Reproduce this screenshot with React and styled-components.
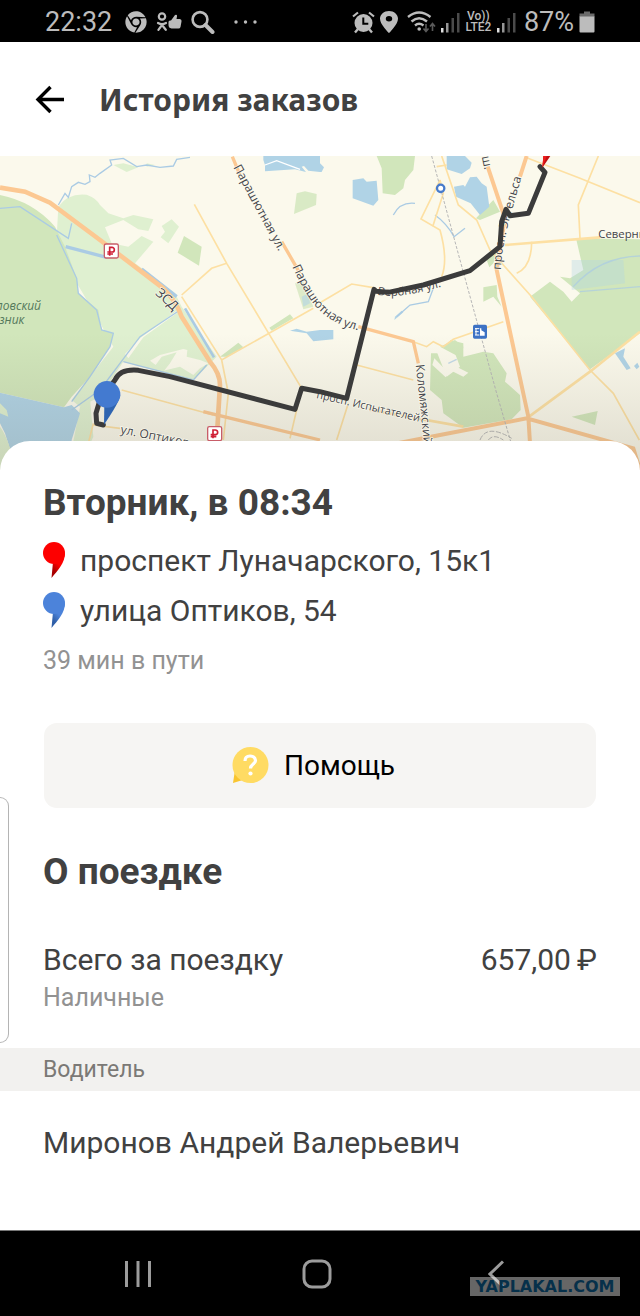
import React from 'react'
import styled, { createGlobalStyle } from 'styled-components'
import { FaChrome } from 'react-icons/fa'
import { MdLocationOn } from 'react-icons/md'

const GlobalStyle = createGlobalStyle`
  * {
    box-sizing: border-box;
  }

  body {
    margin: 0;
    background: #fff;
    color: #414141;
    font-family: Roboto, 'Noto Sans', sans-serif;
  }

  h1, h2, p, ul {
    margin: 0;
    padding: 0;
  }

  svg {
    display: block;
    flex: none;
  }
`

const Page = styled.div`
  position: relative;
  display: flex;
  flex-direction: column;
  min-height: 100vh;
`

const StatusBar = styled.div`
  display: flex;
  justify-content: space-between;
  height: 42px;
  padding: 2px 45px 0;
  background: #000;
  color: #bcbcbc;
`

const StatusGroup = styled.div`
  display: flex;
  align-items: center;
  gap: ${p => p.gap}px;
`

const StatusText = styled.span`
  font-size: 27px;
  line-height: 40px;
  padding: 0 0 0 ${p => p.left || 0}px;
`

const Network = styled.span`
  width: 27px;
  font-size: 12px;
  font-weight: 500;
  line-height: 11px;
  text-align: center;
`

const Header = styled.header`
  display: flex;
  align-items: center;
  gap: 33px;
  height: 114px;
  padding: 2px 34px 0;
`

const IconButton = styled.button`
  display: flex;
  padding: 0;
  border: 0;
  background: none;
  color: #000;
`

const Title = styled.h1`
  font-family: 'Noto Sans', sans-serif;
  font-size: 30px;
  font-weight: 700;
  line-height: 40px;
`

const MapView = styled.svg`
  width: 100%;
  height: 314px;
  font-family: 'Open Sans', 'Noto Sans', sans-serif;
`

const Sheet = styled.main`
  position: relative;
  flex: 1;
  margin-top: -29px;
  padding-top: 38px;
  border-radius: 30px 30px 0 0;
  background: #fff;
`

const Section = styled.section`
  padding: 0 43px;
`

const Heading = styled.h2`
  font-size: 37px;
  font-weight: 700;
  line-height: 48px;
`

const Route = styled.ul`
  margin-top: 8px;
  list-style: none;
`

const Stop = styled.li`
  display: flex;
  align-items: center;
  gap: 15px;
  height: 50px;
  font-size: 30px;
`

const Note = styled.p`
  color: #929292;
  font-size: 25px;
  line-height: ${p => p.line}px;
`

const HelpButton = styled.button`
  display: flex;
  align-items: center;
  justify-content: center;
  gap: 15px;
  width: calc(100% - 2px);
  height: 85px;
  margin: 36px 1px 40px;
  padding: 0 13px 0 0;
  border: 0;
  border-radius: 13px;
  background: #f6f5f3;
  color: #000;
  font-family: inherit;
  font-size: 28px;
`

const Line = styled.div`
  display: flex;
  justify-content: space-between;
  margin-top: ${p => p.top}px;
  font-size: 30px;
  line-height: 40px;
`

const Divider = styled.div`
  margin-top: 33px;
  padding: 0 43px;
  background: #f2f1ef;
  color: #7b7976;
  font-size: 23px;
  line-height: 43px;
`

const EdgePanel = styled.div`
  position: absolute;
  top: 797px;
  left: 0;
  width: 9px;
  height: 246px;
  border: 1px solid #b4b4b4;
  border-left: 0;
  border-radius: 0 10px 10px 0;
`

const NavBar = styled.nav`
  position: relative;
  display: flex;
  align-items: center;
  height: 86px;
  padding: 0 55px 0 48px;
  border-top: 1px solid #777;
  background: #000;
`

const NavButton = styled(IconButton)`
  flex: 1;
  justify-content: center;
  color: #9c9c9c;
`

const Watermark = styled.span`
  position: absolute;
  right: 20px;
  bottom: 20px;
  width: 150px;
  background: rgba(255, 255, 255, 0.4);
  color: #06304a;
  font-family: 'DejaVu Sans', sans-serif;
  font-size: 16px;
  font-weight: 700;
  line-height: 19px;
  text-align: center;
`

const OkLikeIcon = () => (
  <svg width="26" height="22" viewBox="0 0 26 22">
    <g fill="none" stroke="currentColor" strokeWidth="2.2" strokeLinecap="round">
      <circle cx="6" cy="5.5" r="3.2" />
      <path d="M2 12Q6 14.4 10 12M6 14L2.4 18.8M6 14l3.8 4.8" />
    </g>
    <path d="M12.5 11Q12.5 9 15 9.5L19 4q2.500-1 2 1.500L20.500 8H24q2 0.500 1.500 2.500L24.500 16q-0.500 1.500-2 1.500H15.500Q12.500 17 12.500 14z" fill="currentColor" />
  </svg>
)

const SearchIcon = () => (
  <svg width="24" height="24" viewBox="0 0 24 24" fill="none" stroke="currentColor">
    <circle cx="9" cy="9.5" r="7.4" strokeWidth="2.6" />
    <path d="M14.5 15l7 7" strokeWidth="4" strokeLinecap="round" />
  </svg>
)

const DotsIcon = () => (
  <svg width="34" height="6" viewBox="0 0 34 6" fill="currentColor">
    <circle cx="12" cy="3" r="1.7" />
    <circle cx="21.5" cy="3" r="1.7" />
    <circle cx="31" cy="3" r="1.7" />
  </svg>
)

const AlarmIcon = () => (
  <svg width="23" height="23" viewBox="0 0 23 23" fill="none" stroke="currentColor">
    <circle cx="11.5" cy="12" r="9" fill="currentColor" stroke="none" />
    <path d="M1 5.5L6 1.5M17 1.5l5 4" strokeWidth="2.2" />
    <path d="M6 18l-3 3.5M17 18l3 3.5" strokeWidth="2.4" />
    <path d="M11.3 6.5v6.2h5" stroke="#000" strokeWidth="2" />
  </svg>
)

const WifiIcon = () => (
  <svg width="33" height="22" viewBox="0 0 33 22" fill="none" stroke="currentColor">
    <path d="M5 6Q16 -3 27.5 6" strokeWidth="2.4" />
    <path d="M8.5 10.500Q16 4 24 10.500" strokeWidth="2.4" />
    <path d="M12 14.500Q16 11 20.500 14.500" strokeWidth="2.4" />
    <circle cx="16.2" cy="18" r="1.8" fill="currentColor" stroke="none" />
    <path d="M23 13v7M20.500 17.500l2.500 3 2.500-3M29.500 20v-7M27 15.500l2.500-3 2.500 3" stroke="#5a5a5a" strokeWidth="1.6" />
  </svg>
)

const SignalIcon = () => (
  <svg width="19" height="22" viewBox="0 0 19 22" fill="currentColor">
    <rect x="0" y="17" width="2.5" height="4.5" fill="#e0e0e0" />
    <rect x="5" y="12" width="2.5" height="9.5" opacity={0.8} />
    <rect x="10.5" y="7" width="2.5" height="14.5" fill="#4b4b4b" />
    <rect x="16" y="2" width="2.5" height="19.5" fill="#4b4b4b" />
  </svg>
)

const BatteryIcon = () => (
  <svg width="16" height="22" viewBox="0 0 16 22">
    <path d="M5 0.5h6v2h4.500V6H0.500V2.500H5z" fill="#6b6b6b" />
    <path d="M0.5 5.500h15v15a1 1 0 0 1-1 1h-13a1 1 0 0 1-1-1z" fill="currentColor" />
  </svg>
)

const BackArrow = () => (
  <svg width="32" height="32" viewBox="0 0 32 32" fill="none" stroke="currentColor" strokeWidth="3.4">
    <path d="M30 15.500H4M16.500 3L4 15.500l12.500 12.500" />
  </svg>
)

const PinIcon = ({ color, shade }) => (
  <svg width="22" height="36" viewBox="0 0 22 36">
    <defs>
      <linearGradient id={`tail${shade.slice(1)}`} x1="0.6" y1="0.5" x2="0.3" y2="1">
        <stop offset="0" stopColor={color} />
        <stop offset="0.7" stopColor={shade} />
      </linearGradient>
    </defs>
    <path d="M22 11C22 21 15 28 8.500 36L10 20z" fill={`url(#tail${shade.slice(1)})`} />
    <circle cx="11" cy="11" r="11" fill={color} />
  </svg>
)

const HelpIcon = () => (
  <svg width="37" height="37" viewBox="0 0 37 37">
    <path d="M3 23L1 36l13-4z" fill="#f9c530" />
    <circle cx="18.5" cy="18" r="18" fill="#ffdb63" />
    <path d="M13 14Q13 9 18 9T23.500 13.500C23.500 17 18.500 17 18.500 21.500" fill="none" stroke="#fff" strokeWidth="3.2" />
    <circle cx="18.5" cy="26.5" r="2.1" fill="#fff" />
  </svg>
)

const TollSign = ({ x, y }) => (
  <g transform={`translate(${x} ${y})`}>
    <rect x="-21" y="-21" width="42" height="42" rx="5" fill="#fff" stroke="#c85d68" strokeWidth="4" />
    <path d="M-5 14V-11H2a6.500 6.500 0 0 1 0 14H-12M-12 9H5" fill="none" stroke="#cf1f35" strokeWidth="5" />
  </g>
)

const labels = [
  { id: 'north1', text: 'Парашютная ул.', d: 'M700 52L850 330' },
  { id: 'north2', text: 'Парашютная ул.', d: 'M877 350C905 410 935 470 985 503S1060 536 1120 552' },
  { id: 'zsd', text: 'ЗСД', d: 'M464 432L560 520', size: 40 },
  { id: 'optics', text: 'ул. Оптиков', d: 'M360 850L640 905' },
  { id: 'testers', text: 'просп. Испытателей', d: 'M948 744L1340 834', size: 32 },
  { id: 'kolom', text: 'Коломяжский', d: 'M1247 645Q1258 740 1276 925' },
  { id: 'engels', text: 'просп. Энгельса', d: 'M1502 360C1508 270 1530 200 1568 70' },
  { id: 'willow', text: 'Вербная ул.', d: 'M1132 434Q1200 448 1330 408', size: 34 }
]

const CityMap = () => (
  <MapView viewBox="0 18 1920 942" preserveAspectRatio="xMidYMid slice" aria-label="Маршрут поездки">
    <defs>
      <linearGradient id="fade" x1="0" y1="0" x2="0" y2="1">
        <stop offset="0" stopColor="#6b6552" stopOpacity="0" />
        <stop offset="1" stopColor="#6b6552" stopOpacity="0.2" />
      </linearGradient>
    </defs>
    <rect y="18" width="1920" height="942" fill="#fbf9ec" />

    {/* parks */}
    <g fill="#dff0d0">
      <path d="M175 170Q205 128 260 134Q290 145 300 165L325 190 370 205 400 195 460 208 445 243 415 238 370 210 315 232 335 280 385 290 425 258 460 275 405 340 440 365 525 430 545 470 650 620 580 690 440 655 370 635 300 740 240 770 215 750 340 590 290 500 225 390 170 260z" />
      <path d="M515 208L537 230 505 280 482 262 495 245 485 228z" />
      <path d="M240 770L270 745 280 860 262 900H215z" />
      <path d="M340 45L370 40 415 52 380 66zM440 40L465 45 440 50z" />
    </g>
    <g fill="#fbf9ec">
      <path d="M450 632L480 615 550 597 562 600 560 620 600 630 625 640 600 655 580 675 540 650 490 662z" />
      <path d="M375 612L420 565 530 482 530 490 430 562 385 625z" />
    </g>
    <path d="M485 620L530 607 510 640 490 665 460 655z" fill="#dff0d0" />
    <g fill="#d1e6bb">
      <path d="M0 135Q100 155 165 230L195 290 230 385 235 430 295 480 305 540 340 550 330 590 270 680 215 740 192 772 0 728z" />
      <path d="M552 258L605 290 597 347 533 308z" />
      <path d="M890 130L915 124 950 132 948 165 882 192z" opacity="0.8" />
      <path d="M885 400L910 395 940 470 910 478z" opacity="0.7" />
      <path d="M808 533L870 493 880 505 815 542zM660 620L715 578 730 592 680 620z" />
      <path d="M1130 18H1245L1240 60 1215 90 1210 115 1185 135 1148 130 1145 55z" />
      <path d="M1428 205L1480 150 1500 185 1440 210zM1497 290L1480 340 1468 352 1460 330z" />
      <path d="M1450 412L1490 405 1492 440 1505 470 1480 440 1450 455z" />
      <path d="M1728 265L1920 268V550L1770 658 1590 440 1650 395 1690 425 1715 455 1740 430 1680 380 1710 385 1750 360z" />
      <path d="M1293 610L1312 610 1340 680 1380 650 1350 570 1390 580 1390 620 1450 605 1480 610 1520 670 1515 695 1560 735 1562 780 1535 808 1390 833 1330 790 1325 750 1290 720z" />
      <path d="M1715 800L1793 783 1785 825z" />
      <path d="M1320 590L1365 570 1390 590 1385 625z" />
    </g>
    <g fill="#fbf9ec">
      <path d="M1303 625L1345 668 1337 682 1297 645zM1340 635L1405 668 1390 680 1330 650z" />
    </g>

    {/* water */}
    <g fill="#b0d3e6">
      <path d="M0 728L192 772 215 765 240 790 215 870V960H50L15 850 0 820z" />
      <path d="M790 18H960V66L925 62 912 48 905 50 918 66 885 58 795 64 795 45 790 30z" />
      <path d="M960 40L972 52 965 66H960z" />
      <path d="M1058 90L1090 85 1100 95 1130 92 1135 150 1120 167 1058 145z" />
      <path d="M1340 18H1395L1415 38 1410 55 1385 72 1340 58z" />
      <path d="M1362 110L1390 105 1395 110 1410 82 1430 80 1445 100 1460 110 1468 170 1440 195 1412 160 1368 140z" />
      <path d="M870 542L890 536 920 545 960 540 1000 540V568L940 574 920 550z" />
      <path d="M1845 610L1875 595 1870 620 1892 655 1880 660zM1902 648L1912 638 1918 650 1910 658z" />
      <path d="M905 440L925 430 930 460 910 470z" opacity="0.6" />
      <path d="M1185 500L1205 482 1210 487 1183 510z" />
      <path d="M1715 330L1870 330 1875 400 1715 420z" opacity="0.35" />
    </g>
    <path d="M0 830Q30 870 45 960H0zM0 760L20 780 25 800 0 790z" fill="#dff0d0" />
    <g fill="none" stroke="#aacbe4" strokeWidth="4">
      <path d="M0 175L60 170 205 265 215 220M175 165L195 130 205 142 215 110 235 97 255 103 270 95 268 75 285 82 300 70 335 45 330 30 370 25 410 50 440 45 480 52 520 48 530 28 570 22" />
      <path d="M197 290L320 322M425 357L530 440" strokeWidth="10" />
      <path d="M555 475L642 622" strokeWidth="8" />
      <path d="M170 255L230 385 235 430 290 480 305 540 340 550 330 590 270 680 215 755" />
      <path d="M215 780L300 720 420 560 540 480M370 635L580 690 620 645" />
      <path d="M1180 195Q1200 155 1245 160M1305 195Q1340 220 1362 260L1395 235M1190 500L1230 465 1285 455 1300 415" />
      <path d="M1720 410Q1800 320 1920 318M1740 425L1920 410M1345 640L1370 628" opacity="0.7" />
      <path d="M795 45L830 32 900 58" stroke="#fff" />
    </g>

    {/* streets */}
    <g fill="none" stroke="#fde0a3" strokeWidth="5">
      <path d="M583 163L680 340 905 715 870 865M545 435L635 355 680 340M545 440L665 630 700 610 940 475M665 630L685 730 670 870M280 820L265 880M365 720L640 795M960 458L1055 402 1120 413" />
      <path d="M360 835L280 825M1070 645L1240 690M1045 760L1010 870" />
      <path d="M1325 18L1375 165 1430 210 1470 300 1595 440 1770 660 1840 730 1918 870" />
      <path d="M1310 50L1340 45M1320 90L1263 207 1320 240Q1345 330 1325 380M1320 90L1330 130 1298 230M1595 275Q1595 350 1550 370M1240 575L1280 590 1300 575 1330 590 1360 568 1510 515" />
      <path d="M1580 23L1740 85 1920 158M1795 18L1735 165 1740 265" />
      <path d="M1515 285L1800 262M1580 805L1770 665 1920 545M1110 780L1390 830" strokeWidth="8" />
    </g>
    <g fill="none" stroke="#fcc892" strokeWidth="10">
      <path d="M0 113L75 125 150 158 300 270 490 415Q530 455 545 500L630 635Q660 670 660 705L650 870" strokeWidth="14" />
      <path d="M697 20L720 75M845 275L900 370M610 785L960 870M1075 530L1240 575 1255 640" />
      <path d="M1463 50L1515 205 1490 360 1585 800 1590 880M1580 18L1560 80M1040 910L1320 855 1580 805 1900 895 1920 960" strokeWidth="12" />
    </g>
    <g fill="none" stroke="#b7b7b7" strokeWidth="3">
      <path d="M1295 18L1380 330 1490 730 1535 885" strokeDasharray="9 5" />
      <path d="M1440 870Q1460 820 1535 865M1465 870Q1480 850 1510 870" strokeDasharray="15 5" />
    </g>

    <rect y="550" width="1920" height="410" fill="url(#fade)" />

    {labels.map(label => (
      <g key={label.id}>
        <path id={label.id} d={label.d} fill="none" />
        <text fontSize={label.size || 36} fill="#43444a" stroke="#fbf9ec" strokeWidth="4" paintOrder="stroke">
          <textPath href={`#${label.id}`}>{label.text}</textPath>
        </text>
      </g>
    ))}
    <g fontSize="36" fill="#54795c" fontStyle="italic">
      <text x="123" y="479" textAnchor="end">ловский</text>
      <text x="73" y="521" textAnchor="end">зник</text>
    </g>
    <text x="1795" y="265" fontSize="34" fill="#43444a">Северны</text>
    <text x="1445" y="20" fontSize="36" fill="#43444a" transform="rotate(78 1445 20)">ш.</text>

    <TollSign x={334} y={303} />
    <TollSign x={644} y={851} />
    <circle cx="1322" cy="115" r="11" fill="#fff" stroke="#477bcc" strokeWidth="7" />
    <g transform="translate(1440 545)">
      <rect x="-21" y="-21" width="42" height="42" rx="5" fill="#3d72c4" />
      <path d="M-15 -9H-2M-15 0H-4M-12 -11V10M-15 10H-2" fill="none" stroke="#fff" strokeWidth="3" />
      <path d="M0 -10H4V-4L14 2V12H0z" fill="#fff" />
    </g>

    <path
      d="M310 825L290 820 288 790 300 750 345 690Q360 656 415 661L510 680 885 778 905 715 960 725 1040 745 1122 418 1128 424 1165 427 1270 405 1410 362 1500 290 1505 215 1518 178 1530 197 1585 190 1635 67 1620 50"
      fill="none"
      stroke="#3b3b3b"
      strokeWidth="15"
      strokeLinejoin="round"
      strokeLinecap="round"
    />
    <path d="M1630 18H1651L1627 53z" fill="#c20f12" />
    <path d="M1630 18H1640L1627 53z" fill="#ed1c1c" />
    <path d="M312 824L313 765 361 735Q358 757 312 824z" fill="#2f64b0" />
    <circle cx="321" cy="733" r="40" fill="#437ad0" />
  </MapView>
)

export default () => (
  <Page>
    <GlobalStyle />
    <StatusBar>
      <StatusGroup gap={9}>
        <StatusText>22:32</StatusText>
        <svg width="26" height="22" viewBox="0 0 26 22"><FaChrome x="4" size="22" /></svg>
        <OkLikeIcon />
        <SearchIcon />
        <DotsIcon />
      </StatusGroup>
      <StatusGroup gap={5}>
        <AlarmIcon />
        <svg width="18" height="22" viewBox="5 2 14 20" preserveAspectRatio="none"><MdLocationOn size="24" /></svg>
        <WifiIcon />
        <SignalIcon />
        <Network>Vo))<br />LTE2</Network>
        <SignalIcon />
        <StatusText left={3}>87%</StatusText>
        <BatteryIcon />
      </StatusGroup>
    </StatusBar>

    <Header>
      <IconButton aria-label="Назад"><BackArrow /></IconButton>
      <Title>История заказов</Title>
    </Header>

    <CityMap />

    <Sheet>
      <Section>
        <Heading>Вторник, в 08:34</Heading>
        <Route>
          <Stop><PinIcon color="#fd0000" shade="#a80000" />проспект Луначарского, 15к1</Stop>
          <Stop><PinIcon color="#4c83da" shade="#2f5fa8" />улица Оптиков, 54</Stop>
        </Route>
        <Note line={52}>39 мин в пути</Note>
        <HelpButton><HelpIcon />Помощь</HelpButton>
        <Heading>О поездке</Heading>
        <Line top={44}>
          <span>Всего за поездку</span>
          <span>657,00{'\u2009'}₽</span>
        </Line>
        <Note line={35}>Наличные</Note>
      </Section>
      <Divider>Водитель</Divider>
      <Section>
        <Line top={32}>Миронов Андрей Валерьевич</Line>
      </Section>
    </Sheet>

    <EdgePanel />

    <NavBar>
      <NavButton aria-label="Недавние">
        <svg width="28" height="28" viewBox="0 0 28 28" stroke="currentColor" strokeWidth="3">
          <path d="M2.500 1v26M14 1v26M25.500 1v26" />
        </svg>
      </NavButton>
      <NavButton aria-label="Домой">
        <svg width="30" height="30" viewBox="0 0 30 30" fill="none" stroke="currentColor" strokeWidth="3">
          <rect x="2" y="2" width="26" height="26" rx="8" />
        </svg>
      </NavButton>
      <NavButton aria-label="Назад">
        <svg width="16" height="28" viewBox="0 0 16 28" fill="none" stroke="currentColor" strokeWidth="3">
          <path d="M15 1.500L2 14l13 12.500" />
        </svg>
      </NavButton>
      <Watermark>YAPLAKAL.COM</Watermark>
    </NavBar>
  </Page>
)
